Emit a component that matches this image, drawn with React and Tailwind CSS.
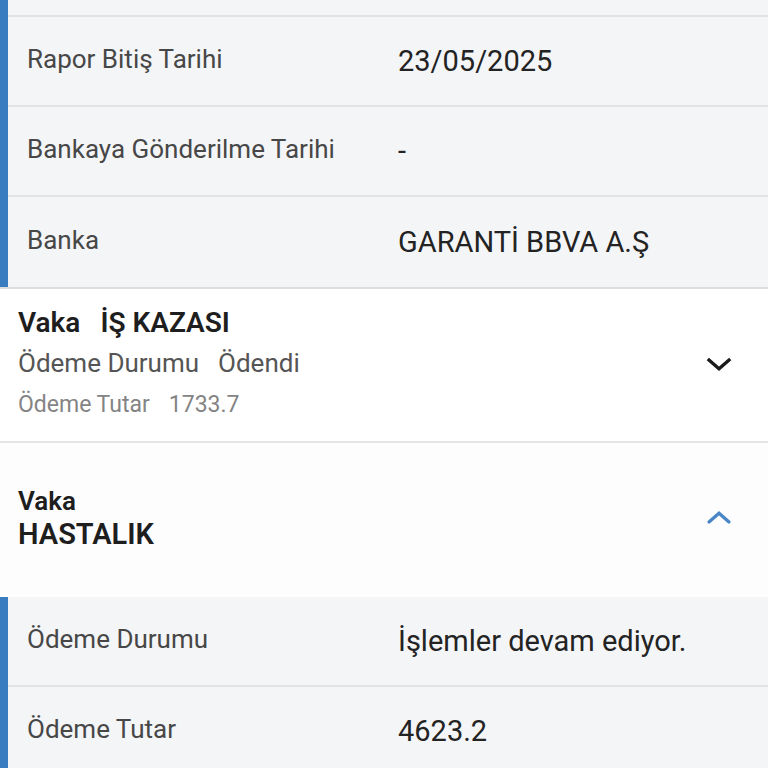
import React from "react";

const ChevronDown = ({ className }) => (
  <svg viewBox="0 0 24 24" className={className} fill="none" stroke="currentColor" strokeWidth="2.6" strokeLinecap="square">
    <path d="M4 8l8 7 8-7" />
  </svg>
);

const ChevronUp = ({ className }) => (
  <svg viewBox="0 0 24 24" className={className} fill="none" stroke="currentColor" strokeWidth="2.6" strokeLinecap="round">
    <path d="M4 16l8-7 8 7" />
  </svg>
);

const Row = ({ label, value, last }) => (
  <div className={`flex items-center h-[90px] ${last ? "" : "border-b-2 border-[#e2e3e5]"}`}>
    <div className="w-[390px] pl-[19px] pb-[4px] text-[26px] text-[#474747]">{label}</div>
    <div className="pt-[1px] text-[29px] text-[#232323]">{value}</div>
  </div>
);

export default function App() {
  return (
    <div className="w-[768px] h-[768px] overflow-hidden bg-white" style={{ fontFamily: "Roboto, 'Noto Sans', sans-serif" }}>
      {/* Report details */}
      <div className="flex border-b-2 border-[#dcdddf]">
        <div className="w-[8px] bg-[#3a7cc0] shrink-0" />
        <div className="flex-1 bg-[#f4f5f7]">
          <div className="h-[17px] border-b-2 border-[#e2e3e5]" />
          <Row label="Rapor Bitiş Tarihi" value="23/05/2025" />
          <Row label="Bankaya Gönderilme Tarihi" value="-" />
          <Row label="Banka" value="GARANTİ BBVA A.Ş" last />
        </div>
      </div>

      {/* Vaka: İş kazası (collapsed) */}
      <div className="flex items-center h-[154px] pl-[18px] pr-[34px] bg-white border-b-2 border-[#e4e5e7]">
        <div className="flex-1 flex flex-col pb-[3px]">
          <div className="flex gap-[20px] text-[28px] leading-[41px] font-semibold text-[#1e1e1e]">
            <span>Vaka</span>
            <span>İŞ KAZASI</span>
          </div>
          <div className="flex gap-[19px] text-[26px] leading-[41px] text-[#555555]">
            <span>Ödeme Durumu</span>
            <span>Ödendi</span>
          </div>
          <div className="flex gap-[19px] text-[23px] leading-[41px] text-[#848484]">
            <span>Ödeme Tutar</span>
            <span>1733.7</span>
          </div>
        </div>
        <ChevronDown className="w-[30px] h-[30px] text-[#1a1a1a]" />
      </div>

      {/* Vaka: Hastalık (expanded) */}
      <div className="flex items-center h-[154px] pl-[18px] pr-[34px] bg-[#fdfdfd]">
        <div className="flex-1 flex flex-col pb-[5px] font-semibold text-[#1e1e1e]">
          <span className="text-[26px] leading-[33px]">Vaka</span>
          <span className="text-[29px] leading-[33px]">HASTALIK</span>
        </div>
        <ChevronUp className="w-[30px] h-[30px] mb-[6px] text-[#4a86c5]" />
      </div>

      <div className="flex">
        <div className="w-[8px] bg-[#3a7cc0] shrink-0" />
        <div className="flex-1 bg-[#f4f5f7]">
          <Row label="Ödeme Durumu" value="İşlemler devam ediyor." />
          <Row label="Ödeme Tutar" value="4623.2" />
        </div>
      </div>
    </div>
  );
}
